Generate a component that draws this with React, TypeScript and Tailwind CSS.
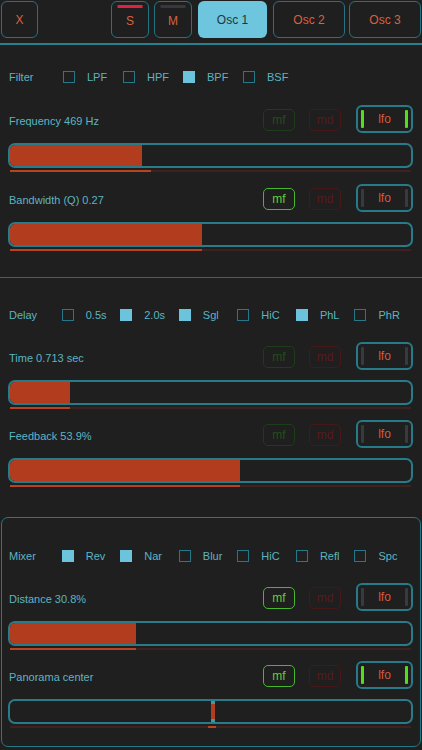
import React from 'react';

type Param = {
  label: string;
  fill: number;
  line?: number;
  mf: boolean;
  lfo: boolean;
  marker?: boolean;
};

const filterOpts = [
  { name: 'LPF', on: false },
  { name: 'HPF', on: false },
  { name: 'BPF', on: true },
  { name: 'BSF', on: false },
];

const delayOpts = [
  { name: '0.5s', on: false },
  { name: '2.0s', on: true },
  { name: 'Sgl', on: true },
  { name: 'HiC', on: false },
  { name: 'PhL', on: true },
  { name: 'PhR', on: false },
];

const mixerOpts = [
  { name: 'Rev', on: true },
  { name: 'Nar', on: true },
  { name: 'Blur', on: false },
  { name: 'HiC', on: false },
  { name: 'Refl', on: false },
  { name: 'Spc', on: false },
];

function TopButton({ label, bar, active, className }: { label: string; bar?: string; active?: boolean; className: string }) {
  return (
    <div
      className={`relative h-[37px] rounded-[6px] flex items-center justify-center text-[12px] ${
        active ? 'bg-[#6ec5de] text-[#1d3640]' : 'border-[1.5px] border-[#237482] text-[#d8613e]'
      } ${className}`}
    >
      {bar && <div className={`absolute top-[3px] left-1/2 -translate-x-1/2 w-[25px] h-[3px] ${bar}`} />}
      <span className={bar ? 'mt-[3px]' : ''}>{label}</span>
    </div>
  );
}

function CheckRow({ title, opts }: { title: string; opts: { name: string; on: boolean }[] }) {
  return (
    <div className="flex items-center h-[24px] pl-[1px]">
      <span className="w-[54px] text-[#5cb5c2] pt-[1px]">{title}</span>
      {opts.map(o => (
        <div key={o.name} className="w-[60px] flex items-center gap-[12px]">
          <div
            className={`w-[12px] h-[12px] ${o.on ? 'bg-[#6cc4dc]' : 'border-[1.5px] border-[#24788a]'}`}
          />
          <span className="text-[#5cb5c2] pt-[1px]">{o.name}</span>
        </div>
      ))}
    </div>
  );
}

function ParamBlock({ p, className }: { p: Param; className: string }) {
  return (
    <div className={className}>
      {/* header */}
      <div className="flex items-center h-[28px]">
        <span className="pl-[1px] pt-[4px] text-[#5cb5c2]">{p.label}</span>
        <div
          className={`ml-auto mt-[2px] w-[32px] h-[22px] rounded-[5px] border-[1.5px] flex items-center justify-center text-[12px] ${
            p.mf ? 'border-[#47b82c] text-[#5fcf38]' : 'border-[#1e3d1a] text-[#224f1c]'
          }`}
        >
          mf
        </div>
        <div className="ml-[14px] mt-[2px] w-[32px] h-[22px] rounded-[5px] border-[1.5px] border-[#481819] text-[#5a1a1a] flex items-center justify-center text-[12px]">
          md
        </div>
        <div className="ml-[15px] w-[57px] h-[28px] rounded-[6px] border-2 border-[#277b89] flex items-center justify-between px-[3px] text-[12px] text-[#d65a3c]">
          <div className={`w-[3px] h-[18px] rounded-[1px] ${p.lfo ? 'bg-[#4ee01c]' : 'bg-[#363b40]'}`} />
          <span>lfo</span>
          <div className={`w-[3px] h-[18px] rounded-[1px] ${p.lfo ? 'bg-[#4ee01c]' : 'bg-[#363b40]'}`} />
        </div>
      </div>
      {/* slider */}
      <div className="relative mt-[10px] h-[25px] rounded-[7px] border-2 border-[#287c8a] bg-[#1f1f1f] overflow-hidden">
        {p.marker ? (
          <div className="absolute top-0 bottom-0 left-[201px] w-[4px] bg-[#b23c1e]">
            <div className="absolute top-0 left-0 w-[4px] h-[3px] bg-[#3c9aaa]" />
            <div className="absolute bottom-0 left-0 w-[4px] h-[3px] bg-[#3c9aaa]" />
          </div>
        ) : (
          <div className="h-full bg-[#b23c1e] rounded-l-[4px]" style={{ width: `${p.fill}%` }} />
        )}
      </div>
      {/* underline */}
      <div className="relative mt-[2px] mx-[2px] h-[2px] bg-[#3d2220]">
        {p.marker ? (
          <div className="absolute top-0 left-[198px] w-[8px] h-[2px] bg-[#b8431f]" />
        ) : (
          <div className="h-full bg-[#b8431f]" style={{ width: `${p.line ?? p.fill}%` }} />
        )}
      </div>
    </div>
  );
}

export default function App() {
  return (
    <div className="w-[422px] h-[750px] bg-[#1f1f1f] overflow-hidden font-['Liberation_Sans',Arial,sans-serif] text-[11px]">
      {/* Top bar */}
      <div className="flex items-start h-[45px] pt-[1px] px-[1px] border-b-2 border-[#28808e]">
        <TopButton label="X" className="w-[37px]" />
        <TopButton label="S" bar="bg-[#e2203f]" className="ml-[73px] w-[38px]" />
        <TopButton label="M" bar="bg-[#36383d]" className="ml-[5px] w-[38px]" />
        <TopButton label="Osc 1" active className="ml-[6px] w-[69px]" />
        <TopButton label="Osc 2" className="ml-[6px] w-[72px]" />
        <TopButton label="Osc 3" className="ml-[4px] w-[72px]" />
      </div>

      {/* Filter */}
      <div className="pl-[8px] pr-[9px] pt-[20px]">
        <CheckRow title="Filter" opts={filterOpts} />
        <ParamBlock className="mt-[16px]" p={{ label: 'Frequency 469 Hz', fill: 32.9, line: 35.2, mf: false, lfo: true }} />
        <ParamBlock className="mt-[12px]" p={{ label: 'Bandwidth (Q) 0.27', fill: 47.9, mf: true, lfo: false }} />
      </div>
      <div className="mt-[26px] h-px bg-[#1f6f7b]" />

      {/* Delay */}
      <div className="pl-[8px] pr-[9px] pt-[25px]">
        <CheckRow title="Delay" opts={delayOpts} />
        <ParamBlock className="mt-[15px]" p={{ label: 'Time 0.713 sec', fill: 15, mf: false, lfo: false }} />
        <ParamBlock className="mt-[11px]" p={{ label: 'Feedback 53.9%', fill: 57.4, mf: false, lfo: false }} />
      </div>

      {/* Mixer */}
      <div className="mt-[30px] mx-[1px] h-[230px] rounded-[7px] border-[1.5px] border-[#257886] pl-[6px] pr-[7px] pt-[26px]">
        <CheckRow title="Mixer" opts={mixerOpts} />
        <ParamBlock className="mt-[15px]" p={{ label: 'Distance 30.8%', fill: 31.4, mf: true, lfo: false }} />
        <ParamBlock className="mt-[11px]" p={{ label: 'Panorama center', fill: 0, mf: true, lfo: true, marker: true }} />
      </div>
    </div>
  );
}
